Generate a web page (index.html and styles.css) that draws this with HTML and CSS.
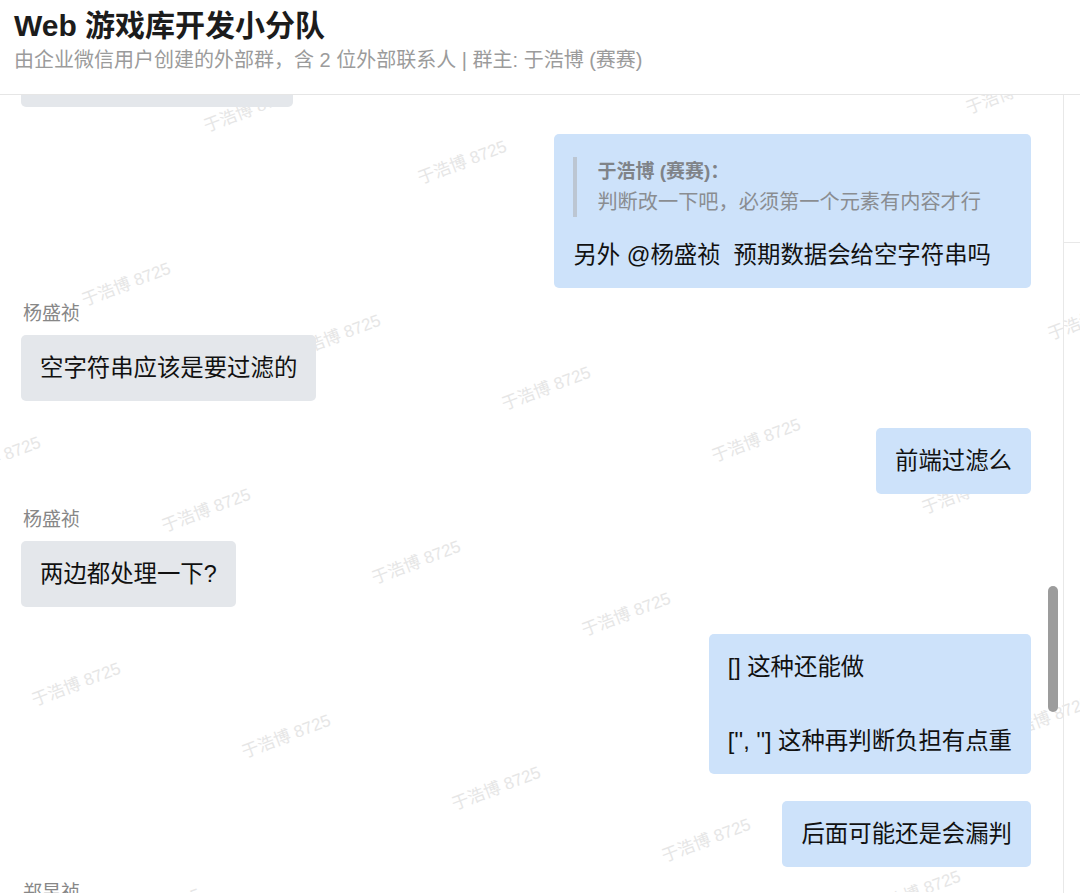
FILE: index.html
```html
<!DOCTYPE html>
<html lang="zh-CN">
<head>
    <meta charset="UTF-8">
    <meta name="viewport" content="width=device-width, initial-scale=1.0">
    <title>Web 游戏库开发小分队</title>
    <link rel="stylesheet" href="styles.css">
</head>
<body>
    <div class="app">
        <!-- Group header -->
        <header class="topbar">
            <h1 class="group-title">Web 游戏库开发小分队</h1>
            <p class="group-meta">由企业微信用户创建的外部群，含 2 位外部联系人 | 群主: 于浩博 (赛赛)</p>
        </header>

        <div class="main">
            <!-- Watermark layer -->
            <svg class="watermark" width="1080" height="797">
                <g fill="#e6e6e6" font-size="17" text-anchor="middle">
                    <text transform="translate(1010 -3) rotate(-21)" dy="0.35em">于浩博 8725</text>
                    <text transform="translate(248 15) rotate(-21)" dy="0.35em">于浩博 8725</text>
                    <text transform="translate(462 67) rotate(-21)" dy="0.35em">于浩博 8725</text>
                    <text transform="translate(672 119) rotate(-21)" dy="0.35em">于浩博 8725</text>
                    <text transform="translate(882 171) rotate(-21)" dy="0.35em">于浩博 8725</text>
                    <text transform="translate(1092 223) rotate(-21)" dy="0.35em">于浩博 8725</text>
                    <text transform="translate(126 189) rotate(-21)" dy="0.35em">于浩博 8725</text>
                    <text transform="translate(336 241) rotate(-21)" dy="0.35em">于浩博 8725</text>
                    <text transform="translate(546 293) rotate(-21)" dy="0.35em">于浩博 8725</text>
                    <text transform="translate(756 345) rotate(-21)" dy="0.35em">于浩博 8725</text>
                    <text transform="translate(966 397) rotate(-21)" dy="0.35em">于浩博 8725</text>
                    <text transform="translate(-4 363) rotate(-21)" dy="0.35em">于浩博 8725</text>
                    <text transform="translate(206 415) rotate(-21)" dy="0.35em">于浩博 8725</text>
                    <text transform="translate(416 467) rotate(-21)" dy="0.35em">于浩博 8725</text>
                    <text transform="translate(626 519) rotate(-21)" dy="0.35em">于浩博 8725</text>
                    <text transform="translate(836 571) rotate(-21)" dy="0.35em">于浩博 8725</text>
                    <text transform="translate(1046 623) rotate(-21)" dy="0.35em">于浩博 8725</text>
                    <text transform="translate(76 589) rotate(-21)" dy="0.35em">于浩博 8725</text>
                    <text transform="translate(286 641) rotate(-21)" dy="0.35em">于浩博 8725</text>
                    <text transform="translate(496 693) rotate(-21)" dy="0.35em">于浩博 8725</text>
                    <text transform="translate(706 745) rotate(-21)" dy="0.35em">于浩博 8725</text>
                    <text transform="translate(916 797) rotate(-21)" dy="0.35em">于浩博 8725</text>
                    <text transform="translate(156 815) rotate(-21)" dy="0.35em">于浩博 8725</text>
                </g>
            </svg>

            <!-- Message list -->
            <section class="chat">
                <div class="messages">
                    <div class="msg left">
                        <div class="bubble">这个我再看看怎么处理</div>
                    </div>

                    <div class="msg right">
                        <div class="bubble">
                            <blockquote class="quote">
                                <div class="quote-name">于浩博 (赛赛)：</div>
                                <div class="quote-text">判断改一下吧，必须第一个元素有内容才行</div>
                            </blockquote>
                            <div>另外 @杨盛祯&nbsp; 预期数据会给空字符串吗</div>
                        </div>
                    </div>

                    <div class="msg left named">
                        <div class="name">杨盛祯</div>
                        <div class="bubble">空字符串应该是要过滤的</div>
                    </div>

                    <div class="msg right">
                        <div class="bubble">前端过滤么</div>
                    </div>

                    <div class="msg left named">
                        <div class="name">杨盛祯</div>
                        <div class="bubble">两边都处理一下?</div>
                    </div>

                    <div class="msg right">
                        <div class="bubble">[] 这种还能做<br><br>['', ''] 这种再判断负担有点重</div>
                    </div>

                    <div class="msg right">
                        <div class="bubble">后面可能还是会漏判</div>
                    </div>

                    <div class="msg left named">
                        <div class="name">郑昱祯</div>
                        <div class="bubble">嗯</div>
                    </div>
                </div>
                <div class="scroll-thumb"></div>
            </section>

            <aside class="side">
                <div class="side-top"></div>
            </aside>
        </div>
    </div>
</body>
</html>
```

FILE: styles.css
```css
/* Chat page styles */
body {
    font-family: 'Liberation Sans', 'Noto Sans CJK SC', sans-serif;
    background-color: #fff;
    color: #111;
    margin: 0;
    padding: 0;
}

.app {
    height: 100vh;
    display: flex;
    flex-direction: column;
    overflow: hidden;
}

/* Header */
.topbar {
    position: relative;
    z-index: 2;
    background-color: #fff;
    height: 95px;
    box-sizing: border-box;
    padding: 7px 14px 0;
    border-bottom: 1px solid #e6e6e6;
    flex-shrink: 0;
}

.group-title {
    margin: 0;
    font-size: 30px;
    line-height: 37px;
    font-weight: bold;
    color: #1c1c1c;
}

.group-meta {
    margin: 2px 0 0;
    font-size: 20px;
    line-height: 28px;
    color: #9b9b9b;
}

/* Main area */
.main {
    position: relative;
    flex: 1;
    display: flex;
    overflow: hidden;
}

.watermark {
    position: absolute;
    left: 0;
    top: 0;
    z-index: 0;
    pointer-events: none;
}

.chat {
    position: relative;
    z-index: 1;
    flex: 1;
    overflow: hidden;
}

.messages {
    margin-top: -54px;
    padding: 0 32px 0 21px;
    display: flex;
    flex-direction: column;
}

.msg {
    display: flex;
    flex-direction: column;
    margin-top: 27px;
}

.msg:first-child {
    margin-top: 0;
}

.msg.left {
    align-items: flex-start;
}

.msg.right {
    align-items: flex-end;
}

.msg.named {
    margin-top: 14px;
}

.name {
    font-size: 19px;
    line-height: 24px;
    color: #878787;
    margin: 0 0 9px 2px;
}

.bubble {
    font-size: 23.4px;
    line-height: 37px;
    padding: 15px 19px 14px;
    border-radius: 5px;
    color: #111;
}

.left .bubble {
    background-color: #e4e7eb;
}

.right .bubble {
    background-color: #cde2fa;
}

/* Quoted message inside a reply */
.quote {
    margin: 8px 0 20px;
    padding: 0 31px 0 20px;
    border-left: 4px solid #bcc6d2;
    font-size: 20.2px;
    line-height: 30px;
    color: #8a8d91;
}

.quote-name {
    font-weight: bold;
    font-size: 19px;
    color: #7f8388;
}

/* Overlay scrollbar */
.scroll-thumb {
    position: absolute;
    left: 1048px;
    top: 491px;
    width: 10px;
    height: 126px;
    border-radius: 5px;
    background-color: #9c9c9c;
}

/* Right edge panel */
.side {
    position: relative;
    z-index: 1;
    width: 16px;
    border-left: 1px solid #e8e8e8;
    flex-shrink: 0;
}

.side-top {
    height: 147px;
    border-bottom: 1px solid #e8e8e8;
}
```
